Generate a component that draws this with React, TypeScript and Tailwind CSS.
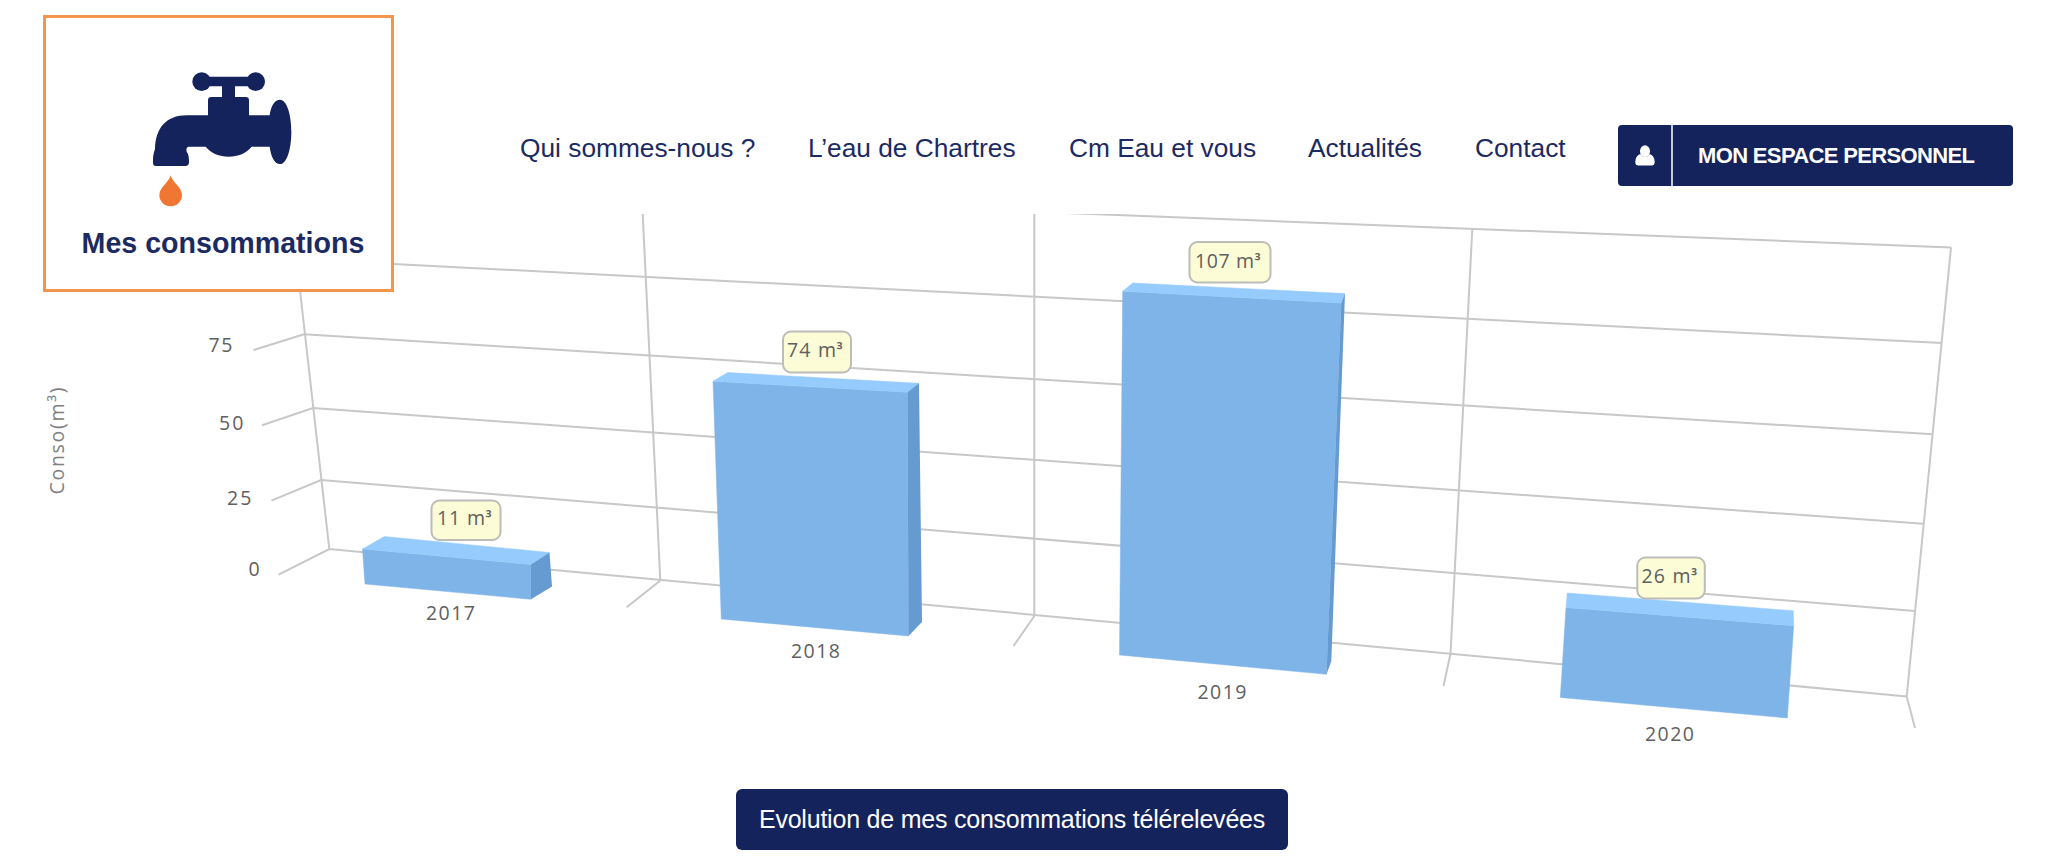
interface LienMenu {
  label: string;
  className: string;
}

interface Barre {
  annee: string;
  valeur: string;
  face: string;
  dessus: string;
  cote?: string;
  etiquette: { x: number; y: number; w: number; h: number };
  texte: { x: number; y: number; w: number };
  legende: { x: number; y: number };
}

const liens: LienMenu[] = [
  { label: 'Qui sommes-nous ?', className: 'w-[288px]' },
  { label: 'L’eau de Chartres', className: 'w-[261px]' },
  { label: 'Cm Eau et vous', className: 'w-[239px]' },
  { label: 'Actualités', className: 'w-[167px]' },
  { label: 'Contact', className: 'w-[143px]' },
];

const barres: Barre[] = [
  {
    annee: '2017',
    valeur: '11',
    face: '362.5,549 531,564.5 531,599.3 365,584',
    dessus: '362.5,549 384.3,536.5 549.5,552.5 531,564.5',
    cote: '531,564.5 549.5,552.5 552,586.5 531,599.3',
    etiquette: { x: 431.5, y: 500.5, w: 69, h: 39.5 },
    texte: { x: 437, y: 525.3, w: 56 },
    legende: { x: 426, y: 620 },
  },
  {
    annee: '2018',
    valeur: '74',
    face: '713,381.3 907.5,392.3 908.5,636 721.3,619',
    dessus: '713,381.3 727.7,372.5 919,383.3 907.5,392.3',
    cote: '907.5,392.3 919,383.3 922,622 908.5,636',
    etiquette: { x: 783, y: 331.5, w: 68, h: 41 },
    texte: { x: 787, y: 357, w: 57 },
    legende: { x: 791, y: 658.3 },
  },
  {
    annee: '2019',
    valeur: '107',
    face: '1122.7,291.3 1341.3,303 1326.5,674.3 1119.5,655',
    dessus: '1122.7,291.3 1132.7,283 1345,293.5 1341.3,303',
    cote: '1341.3,303 1345,293.5 1331.3,661 1326.5,674.3',
    etiquette: { x: 1189.5, y: 242, w: 81, h: 40.5 },
    texte: { x: 1195, y: 267.5, w: 67 },
    legende: { x: 1197.5, y: 698.5 },
  },
  {
    annee: '2020',
    valeur: '26',
    face: '1566,607.5 1793.7,625.8 1787.3,718 1560.3,697.5',
    dessus: '1566,607.5 1567.3,593 1793.3,610.7 1793.7,625.8',
    etiquette: { x: 1637.3, y: 557.5, w: 67.5, h: 41 },
    texte: { x: 1641.5, y: 583.3, w: 57 },
    legende: { x: 1645, y: 740.5 },
  },
];

const grille = [
  // lignes horizontales du fond
  'M1050 212.4L1951 247.5',
  'M296 259L1942 343',
  'M253.6 350L304 334.3L1933 434.3',
  'M262 425.3L312.9 408L1923.7 523.8',
  'M271.4 500.7L321 480L1914.7 611',
  'M278.6 574.7L329.3 549L1906.7 696.4',
  // lignes verticales
  'M296 255L329.3 549',
  'M642.5 210L660.3 580.5L626.7 607.3',
  'M1034.3 210V616L1013.5 646',
  'M1472.3 229L1450.5 653.5L1443.5 686',
  'M1951 247.5L1906.7 696.4L1915 728',
];

const graduations = [
  { label: '75', x: 208.5, y: 352, w: 24 },
  { label: '50', x: 219, y: 429.5, w: 24.5 },
  { label: '25', x: 227, y: 505, w: 24.5 },
  { label: '0', x: 248.5, y: 576.3, w: 12 },
];

const Robinet = () => (
  <svg className="h-[140px] w-[146px]" viewBox="364 213 438 420" fill="#15235c">
    <circle cx="516" cy="245" r="28" />
    <circle cx="678" cy="245" r="28" />
    <path d="M516 230H678V259H616V291H648Q658 291 658 301V346H720C724 316 736 299 751 299C772 299 785 345 785 395C785 446 772 492 751 492C736 492 724 472 720 440H666C650 459 626 470 597 470C568 470 544 459 528 440H476Q468 442 471 455C477 463 478 472 478 487Q478 498 467 498H380Q370 498 370 488C370 470 371 460 376 448C377 386 408 346 472 346H535V301Q535 291 545 291H577V259H516Z" />
    <path
      fill="#f07733"
      d="M423 526C427 546 457 562 457 585C457 604 442 619 423 619C404 619 389 604 389 585C389 562 419 546 423 526Z"
    />
  </svg>
);

const IconeUtilisateur = () => (
  <svg className="h-[21px] w-[20px]" viewBox="0 0 20 21" fill="#fff">
    <ellipse cx="10" cy="6.2" rx="5" ry="6" />
    <path d="M5.2 9C2 10.500 .3 13 .3 17Q.3 20.500 3.500 20.500H16.500Q19.700 20.500 19.700 17C19.700 13 18 10.500 14.800 9C13.500 11 12 12 10 12S6.500 11 5.200 9Z" />
  </svg>
);

const Graphique = () => (
  <svg
    className="block h-[550px] w-[2056px]"
    viewBox="0 214 2056 550"
    fontFamily='"Open Sans", "Noto Sans", sans-serif'
    fontSize="19.500"
    fontWeight="500"
    fill="#606060"
  >
    <g fill="none" stroke="#c8c8c8" strokeWidth="2">
      {grille.map((d) => (
        <path key={d} d={d} />
      ))}
    </g>

    {graduations.map((g) => (
      <text key={g.label} x={g.x} y={g.y} textLength={g.w}>
        {g.label}
      </text>
    ))}
    <text transform="translate(64 494.500) rotate(-90)" textLength="107" fill="#808080">
      Conso(m³)
    </text>

    {barres.map((b) => (
      <g key={b.annee}>
        <polygon points={b.face} fill="#7fb4e8" stroke="#7fb4e8" strokeWidth="0.5" />
        <polygon points={b.dessus} fill="#96cbfd" stroke="#96cbfd" strokeWidth="0.5" />
        {b.cote && <polygon points={b.cote} fill="#659bd0" />}
        <rect
          x={b.etiquette.x}
          y={b.etiquette.y}
          width={b.etiquette.w}
          height={b.etiquette.h}
          rx="8"
          fill="#fcfcd7"
          stroke="#bcbcb8"
          strokeWidth="2"
        />
        <text x={b.texte.x} y={b.texte.y} textLength={b.texte.w - 8}>
          {b.valeur} m
        </text>
        <text x={b.texte.x + b.texte.w - 7.5} y={b.texte.y - 1} fontSize="17" fontWeight="600">
          ³
        </text>
        <text x={b.legende.x} y={b.legende.y} textLength="49">
          {b.annee}
        </text>
      </g>
    ))}
  </svg>
);

const App = () => {
  return (
    <div className="relative h-[864px] w-[2056px] overflow-hidden bg-white font-['Liberation_Sans',Arial,sans-serif]">
      <header className="flex h-[214px] items-start pt-[125px] pl-[520px]">
        <nav className="flex pt-[7px] text-[26.3px] leading-[32px] whitespace-nowrap text-[#1c2a62]">
          {liens.map((lien) => (
            <a key={lien.label} href="#" className={lien.className}>
              {lien.label}
            </a>
          ))}
        </nav>
        <button className="flex h-[61px] w-[395px] items-stretch rounded-[4px] bg-[#15235c] text-white">
          <span className="flex w-[55px] items-center justify-center border-r-2 border-[#c4c8d8]">
            <IconeUtilisateur />
          </span>
          <span className="flex items-center pb-px pl-[25px] text-[22px] font-bold tracking-[-0.65px] whitespace-nowrap">
            MON ESPACE PERSONNEL
          </span>
        </button>
      </header>

      <Graphique />

      <div className="flex justify-center pt-[25px] pr-[32px]">
        <button className="h-[61px] w-[552px] rounded-[6px] bg-[#15235c] text-[25px] tracking-[-0.22px] whitespace-nowrap text-white">
          Evolution de mes consommations télérelevées
        </button>
      </div>

      {/* la carte recouvre le coin du graphique */}
      <div className="absolute top-[15px] left-[43px] flex h-[277px] w-[351px] flex-col items-center border-[3px] border-[#f4954e] bg-white pt-[53px]">
        <div className="pl-[11px]">
          <Robinet />
        </div>
        <span className="mt-[14px] pl-[9px] text-[28.6px] leading-[36px] font-bold whitespace-nowrap text-[#1c2a62]">
          Mes consommations
        </span>
      </div>
    </div>
  );
};

export default App;
